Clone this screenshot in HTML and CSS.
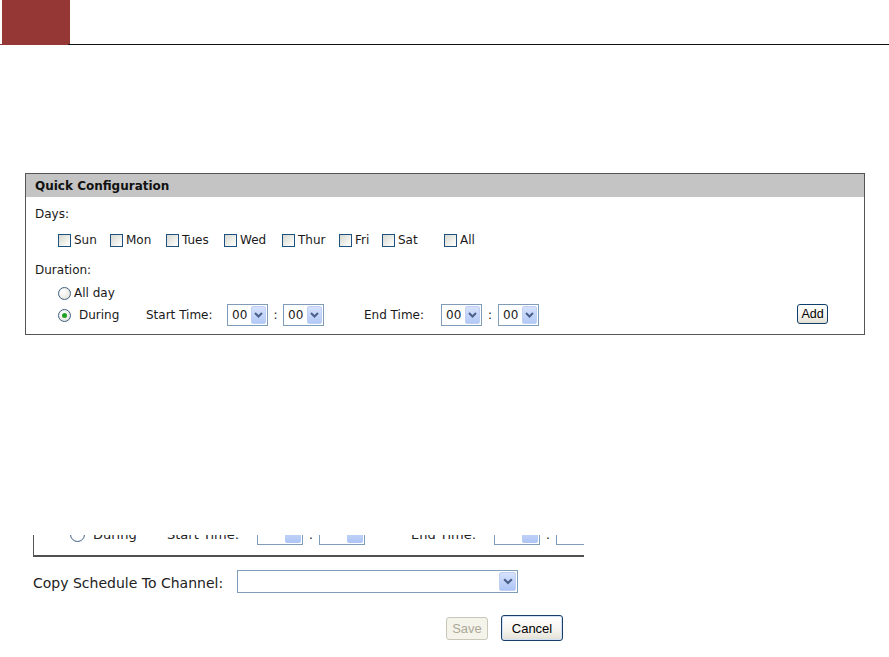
FILE: index.html
```html
<!DOCTYPE html>
<html>
<head>
<meta charset="utf-8">
<title>Schedule</title>
<link rel="stylesheet" href="styles.css">
</head>
<body>
<div class="topbar"><div class="logo"></div></div>
<div class="rule"></div>

<div class="panel">
  <div class="panel-head">Quick Configuration</div>
  <div class="panel-body">
    <div class="row row-days-label">Days:</div>
    <div class="row row-days">
      <span class="day"><span class="cb"></span>Sun</span>
      <span class="day"><span class="cb"></span>Mon</span>
      <span class="day"><span class="cb"></span>Tues</span>
      <span class="day"><span class="cb"></span>Wed</span>
      <span class="day"><span class="cb"></span>Thur</span>
      <span class="day"><span class="cb"></span>Fri</span>
      <span class="day"><span class="cb"></span>Sat</span>
      <span class="day"><span class="cb"></span>All</span>
    </div>
    <div class="row row-dur-label">Duration:</div>
    <div class="row row-allday"><span class="radio"></span><span class="lbl-allday">All day</span></div>
    <div class="row row-during">
      <span class="radio checked"></span>
      <span class="lbl-during">During</span>
      <span class="lbl-start">Start Time:</span>
      <span class="sel"><span class="sel-val">00</span><span class="sel-btn"><svg width="9" height="6" viewBox="0 0 9 6"><polyline points="1,1 4.5,4.5 8,1" fill="none" stroke="#4a5f8a" stroke-width="2"/></svg></span></span>
      <span class="colon">:</span>
      <span class="sel"><span class="sel-val">00</span><span class="sel-btn"><svg width="9" height="6" viewBox="0 0 9 6"><polyline points="1,1 4.5,4.5 8,1" fill="none" stroke="#4a5f8a" stroke-width="2"/></svg></span></span>
      <span class="lbl-end">End Time:</span>
      <span class="sel"><span class="sel-val">00</span><span class="sel-btn"><svg width="9" height="6" viewBox="0 0 9 6"><polyline points="1,1 4.5,4.5 8,1" fill="none" stroke="#4a5f8a" stroke-width="2"/></svg></span></span>
      <span class="colon colon-2">:</span>
      <span class="sel"><span class="sel-val">00</span><span class="sel-btn"><svg width="9" height="6" viewBox="0 0 9 6"><polyline points="1,1 4.5,4.5 8,1" fill="none" stroke="#4a5f8a" stroke-width="2"/></svg></span></span>
      <button class="btn btn-add">Add</button>
    </div>
  </div>
</div>

<div class="fragment">
  <div class="frag-row">
    <span class="fradio"></span>
    <span class="f-during">During</span>
    <span class="f-start">Start Time:</span>
    <span class="fsel"><span class="fsel-btn"></span></span>
    <span class="f-colon">:</span>
    <span class="fsel"><span class="fsel-btn"></span></span>
    <span class="f-end">End Time:</span>
    <span class="fsel"><span class="fsel-btn"></span></span>
    <span class="f-colon">:</span>
    <span class="fsel"><span class="fsel-btn"></span></span>
  </div>
</div>

<div class="copy-row">
  <span class="copy-label">Copy Schedule To Channel:</span>
  <span class="big-sel"><span class="big-sel-val"></span><span class="big-sel-btn"><svg width="10" height="7" viewBox="0 0 10 7"><polyline points="1.2,1.2 5,5 8.8,1.2" fill="none" stroke="#4a5f8a" stroke-width="2.2"/></svg></span></span>
</div>

<div class="actions">
  <button class="btn btn-save" disabled>Save</button>
  <button class="btn btn-cancel">Cancel</button>
</div>
</body>
</html>
```

FILE: styles.css
```css
* { box-sizing: border-box; }
html, body { margin: 0; padding: 0; background: #fff; }
body {
  width: 889px;
  height: 657px;
  overflow: hidden;
  font-family: "DejaVu Sans", Verdana, sans-serif;
  font-size: 12px;
  color: #1a1a1a;
}

/* top banner */
.topbar { height: 44px; display: flex; }
.logo { width: 68px; margin-left: 2px; background: #953735; }
.rule { height: 1px; background: linear-gradient(to right, #953735 0, #953735 68px, #111 68px); }

/* panel */
.panel {
  margin: 128px 0 0 25px;
  width: 840px;
  border: 1px solid #555;
}
.panel-head {
  height: 23px;
  line-height: 24px;
  padding-left: 9px;
  background: #c4c4c4;
  font-weight: bold;
  color: #111;
}
.panel-body { padding: 0 0 7px 9px; }
.row { display: flex; align-items: center; height: 18px; }
.row-days-label { margin-top: 8px; }
.row-days {
  display: grid;
  grid-template-columns: 52px 56px 58px 58px 57px 43px 62px auto;
  margin-top: 8px;
  padding-left: 23px;
}
.row-dur-label { margin-top: 12px; }
.row-allday { margin-top: 5px; padding-left: 23px; }
.row-during { margin-top: 1px; height: 24px; padding-left: 23px; }

.day { display: inline-flex; align-items: center; white-space: nowrap; }
.cb {
  width: 13px; height: 13px;
  border: 1px solid #1c5180;
  background: linear-gradient(135deg, #d8d8d2 0%, #f4f4f0 70%, #fff 100%);
  margin-right: 3px;
  flex: none;
}

.radio {
  width: 13px; height: 13px;
  border-radius: 50%;
  border: 1px solid #3e5e80;
  background: radial-gradient(circle at 35% 35%, #fff 0%, #e8e8e2 70%, #d4d4cc 100%);
  display: inline-flex; align-items: center; justify-content: center;
  flex: none;
}
.radio.checked::after {
  content: "";
  width: 5px; height: 5px; border-radius: 50%;
  background: #21a121;
}
.lbl-allday { margin-left: 3px; }
.lbl-during { margin-left: 8px; width: 67px; flex: none; }
.lbl-start { width: 81px; flex: none; }
.lbl-end { margin-left: 40px; width: 77px; flex: none; }

.sel {
  display: inline-flex;
  width: 41px; height: 22px;
  border: 1px solid #7f9db9;
  background: #fff;
  padding: 1px;
  flex: none;
}
.sel-val { flex: 1; display: flex; align-items: center; padding-left: 3px; }
.sel-btn {
  width: 15px;
  background: linear-gradient(#d6e2fc, #b3c9f6);
  border: 1px solid #c0d0f4;
  border-radius: 2px;
  display: flex; align-items: center; justify-content: center;
}
.colon { width: 15px; text-align: center; flex: none; }
.colon-2 { width: 16px; }

.btn {
  font-family: "Liberation Sans", Arial, sans-serif;
  font-size: 12.5px;
  color: #000;
  border: 1px solid #0f3d6c;
  border-radius: 3px;
  background: linear-gradient(#ffffff 0%, #f4f3ee 60%, #e2e0d4 100%);
  padding: 0;
}
.btn-add { width: 31px; height: 20px; margin-left: auto; margin-right: 36px; margin-top: -3px; }

/* cropped fragment */
.fragment {
  margin: 200px 0 0 33px;
  width: 551px;
  height: 22px;
  overflow: hidden;
  border-left: 1px solid #555;
  border-bottom: 2px solid #505050;
}
.frag-row {
  display: flex; align-items: center;
  height: 24px;
  margin-top: -14px;
  font-size: 13px;
  color: #222;
  white-space: nowrap;
}
.frag-row > * { flex: none; }
.fradio {
  width: 15px; height: 15px; border-radius: 50%;
  border: 1px solid #3e5e80;
  margin-left: 36px; margin-top: 2px;
}
.f-during { margin-left: 8px; width: 74px; padding-top: 3px; }
.f-start { width: 90px; padding-top: 3px; }
.fsel {
  display: inline-flex; justify-content: flex-end;
  width: 46px; height: 23px;
  border: 1px solid #7f9db9;
  padding: 1px;
}
.fsel-btn { width: 16px; background: linear-gradient(#d6e2fc, #adc4f5); border-radius: 2px; }
.f-colon { width: 16px; text-align: center; padding-top: 3px; }
.f-end { margin-left: 46px; width: 83px; padding-top: 3px; }

/* copy row */
.copy-row {
  display: flex; align-items: center;
  height: 23px;
  margin: 13px 0 0 33px;
}
.copy-label { font-size: 14px; color: #222; width: 204px; padding-top: 2px; flex: none; }
.big-sel {
  display: inline-flex;
  width: 281px; height: 23px;
  border: 1px solid #7f9db9;
  padding: 1px;
  flex: none;
}
.big-sel-val { flex: 1; }
.big-sel-btn {
  width: 17px;
  background: linear-gradient(#d6e2fc, #adc4f5);
  border: 1px solid #c0d0f4;
  border-radius: 2px;
  display: flex; align-items: center; justify-content: center;
}

/* action buttons */
.actions {
  display: flex; align-items: center;
  height: 26px;
  margin: 22px 0 0 446px;
}
.btn-save {
  width: 42px; height: 23px;
  font-size: 13px;
  color: #aca899;
  border-color: #c9c7ba;
  background: #f5f4ea;
}
.btn-cancel {
  width: 62px; height: 26px;
  margin-left: 13px;
  font-size: 13px;
  border-color: #1b3f66;
  box-shadow: inset 0 0 0 1px #cfe0f8;
}
```
